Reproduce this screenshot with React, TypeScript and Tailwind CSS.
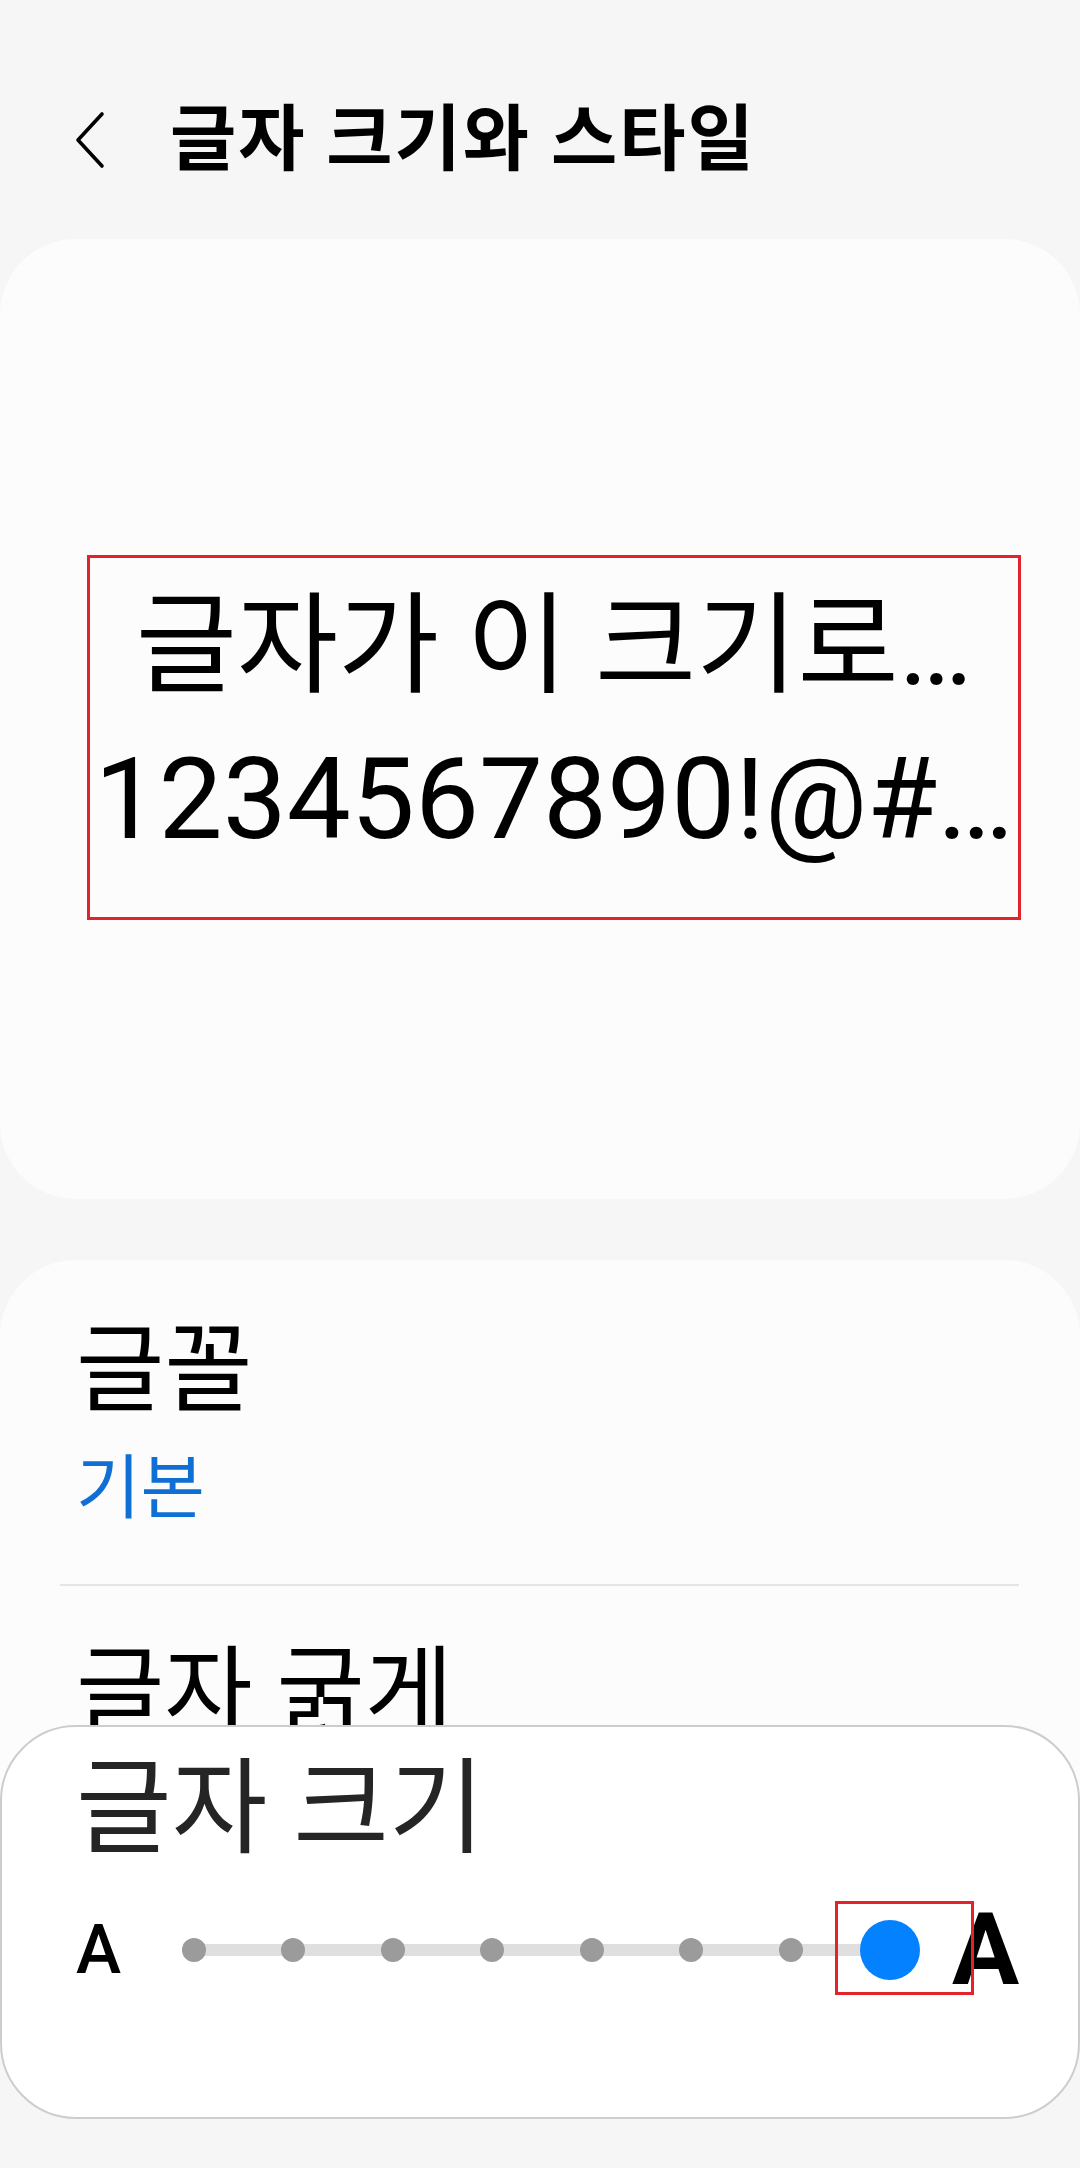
import React from "react";

const FONT = "font-['Roboto','Noto_Sans_CJK_KR',sans-serif]";

function BackChevron() {
  return (
    <svg width="34" height="60" viewBox="0 0 34 60" fill="none" aria-hidden="true">
      <path
        d="M28 4 L4 30 L28 56"
        stroke="#000"
        strokeWidth="3.6"
        strokeLinecap="round"
        strokeLinejoin="round"
      />
    </svg>
  );
}

function SizeSlider({ steps, value }: { steps: number; value: number }) {
  const cells = Array.from({ length: steps }, (_, i) => i);
  return (
    <div className="relative grid w-[796px] grid-cols-8 items-center h-[100px]">
      {/* track running between the first and last stop */}
      <div className="absolute left-[50px] right-[50px] top-1/2 h-[12px] -translate-y-1/2 rounded-full bg-[#dfdfdf]" />
      {cells.map((i) => (
        <div key={i} className="relative flex h-full items-center justify-center">
          {i === value ? (
            <>
              <div className="relative h-[60px] w-[60px] rounded-full bg-[#0381fe]" />
              <div className="pointer-events-none absolute left-[-6px] top-[calc(50%-49px)] h-[94px] w-[139px] border-[3px] border-[#e3222a]" />
            </>
          ) : (
            <div className="relative h-[24px] w-[24px] rounded-full bg-[#9b9b9b]" />
          )}
        </div>
      ))}
    </div>
  );
}

export default function App() {
  return (
    <div className={`relative h-[2168px] w-[1080px] overflow-hidden bg-[#f6f6f6] ${FONT}`}>
      {/* header */}
      <header className="flex items-center pt-[98px] pb-[57px]">
        <div className="flex w-[170px] items-center pl-[74px]">
          <BackChevron />
        </div>
        <h1 className="text-[72px] font-bold leading-[84px] tracking-[2px] text-black">글자 크기와 스타일</h1>
      </header>

      {/* preview card */}
      <section className="h-[960px] rounded-[76px] bg-[#fcfcfc] pt-[316px]">
        <div className="ml-[87px] h-[365px] w-[934px] border-[3px] border-[#e3222a] text-black">
          <p className="mt-[14px] whitespace-nowrap text-center text-[110px] leading-[150px]">
            글자가 이 크기로…
          </p>
          <p className="mt-[2px] whitespace-nowrap text-center text-[114px] leading-[150px]">
            1234567890!@#…
          </p>
        </div>
      </section>

      {/* settings list */}
      <section className="mt-[61px] h-[760px] rounded-[76px] bg-[#fcfcfc] pt-[54px]">
        <div className="px-[76px]">
          <div className="text-[96px] leading-[112px] text-black">글꼴</div>
          <div className="mt-[22px] text-[70px] leading-[82px] text-[#0f6fd5]">기본</div>
        </div>
        <div className="ml-[60px] mr-[61px] mt-[54px] h-[2px] bg-[#e5e5e5]" />
        <div className="mt-[50px] px-[76px] text-[96px] leading-[112px] text-black">글자 굵게</div>
      </section>

      {/* font size sheet floating over the list */}
      <div className="absolute left-0 top-[1725px] h-[394px] w-[1080px] rounded-[76px] border-2 border-[#cdcdcd] bg-white pt-[22px]">
        <div className="pl-[74px] text-[104px] leading-[122px] text-[#252525]">글자 크기</div>
        <div className="mt-[29px] flex items-center">
          <span className="ml-[74px] w-[68px] text-[68px] font-medium leading-none text-black">A</span>
          <SizeSlider steps={8} value={7} />
          <span className="ml-[12px] text-[100px] font-bold leading-none text-black">A</span>
        </div>
      </div>
    </div>
  );
}
